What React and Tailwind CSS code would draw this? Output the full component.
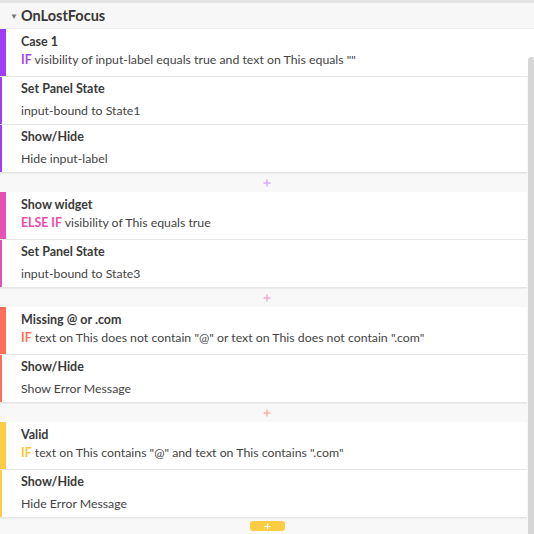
import React from "react";

const groups = [
  {
    bar: "bg-[#9f3cf6]",
    kw: "text-[#a347f5]",
    plus: "#d3a8fb",
    title: "Case 1",
    keyword: "IF",
    cond: 'visibility of input-label equals true and text on This equals ""',
    actions: [
      ["Set Panel State", "input-bound to State1"],
      ["Show/Hide", "Hide input-label"],
    ],
  },
  {
    bar: "bg-[#e551b4]",
    kw: "text-[#e94fae]",
    plus: "#f2a9d5",
    title: "Show widget",
    keyword: "ELSE IF",
    cond: "visibility of This equals true",
    actions: [["Set Panel State", "input-bound to State3"]],
  },
  {
    bar: "bg-[#fd6f5a]",
    kw: "text-[#fd6f5a]",
    plus: "#fbb1a6",
    title: "Missing @ or .com",
    keyword: "IF",
    cond: 'text on This does not contain "@" or text on This does not contain ".com"',
    actions: [["Show/Hide", "Show Error Message"]],
  },
  {
    bar: "bg-[#fccd42]",
    kw: "text-[#fbc53a]",
    plus: null,
    title: "Valid",
    keyword: "IF",
    cond: 'text on This contains "@" and text on This contains ".com"',
    actions: [["Show/Hide", "Hide Error Message"]],
  },
];

function Plus({ color, size = 8 }) {
  return (
    <svg width={size} height={size} viewBox="0 0 8 8">
      <path d="M4 0.5V7.5M0.5 4H7.5" stroke={color} strokeWidth="1.4" />
    </svg>
  );
}

function CaseRow({ g, full }) {
  return (
    <div className={`flex h-[48px] bg-white border-b border-[#e6e6e6] ${full ? "" : "mr-[7px]"}`}>
      <div className={`w-[6px] ${g.bar}`} />
      <div className="flex flex-col pl-[15px] pt-[6px]">
        <div className="text-[12.5px] leading-[14px] font-bold text-[#3a3a3a]">{g.title}</div>
        <div className="mt-[4px] text-[12.3px] leading-[14px] text-[#444]">
          <span className={`font-bold ${g.kw}`}>{g.keyword}</span> {g.cond}
        </div>
      </div>
    </div>
  );
}

function ActionRow({ g, title, desc }) {
  return (
    <div className="flex h-[48px] bg-white border-b border-[#e6e6e6] mr-[7px]">
      <div className={`w-[2px] ${g.bar}`} />
      <div className="flex flex-col pl-[19px] pt-[5px]">
        <div className="text-[12.5px] leading-[14px] font-bold text-[#3a3a3a]">{title}</div>
        <div className="mt-[8px] text-[12.3px] leading-[14px] text-[#444]">{desc}</div>
      </div>
    </div>
  );
}

function Separator({ color }) {
  return (
    <div className="h-[19px] mr-[7px] pl-[7px] flex items-center justify-center bg-[#f8f8f8] shadow-[inset_0_1px_1px_rgba(0,0,0,0.05)]">
      <Plus color={color} />
    </div>
  );
}

export default function App() {
  return (
    <div
      className="relative w-[534px] h-[534px] overflow-hidden bg-[#f8f8f8]"
      style={{ fontFamily: "Lato, 'Open Sans', sans-serif" }}
    >
      <div className="h-[3px] bg-[#e4e4e4]" />
      <div className="h-[26px] flex items-center bg-[#f7f7f7] border-b border-[#ededed]">
        <span className="ml-[10px] text-[8px] text-[#777]">▼</span>
        <span className="ml-[3px] text-[14.5px] font-bold text-[#383838]">OnLostFocus</span>
      </div>
      {groups.map((g, i) => (
        <div key={i}>
          <CaseRow g={g} full={i === 0} />
          {g.actions.map(([t, d], j) => (
            <ActionRow key={j} g={g} title={t} desc={d} />
          ))}
          {g.plus && <Separator color={g.plus} />}
        </div>
      ))}
      <div className="h-[17px] mr-[7px] pl-[7px] flex justify-center pt-[3px] bg-[#f8f8f8] shadow-[inset_0_1px_1px_rgba(0,0,0,0.05)]">
        <div className="w-[35px] h-[10px] rounded-[3px] bg-[#fccd42] flex items-center justify-center">
          <Plus color="#ffffff" size={7} />
        </div>
      </div>
      <div className="absolute right-0 top-[57px] bottom-0 w-[6px] rounded-t-[3px] bg-[#d6d6d6]" />
    </div>
  );
}
